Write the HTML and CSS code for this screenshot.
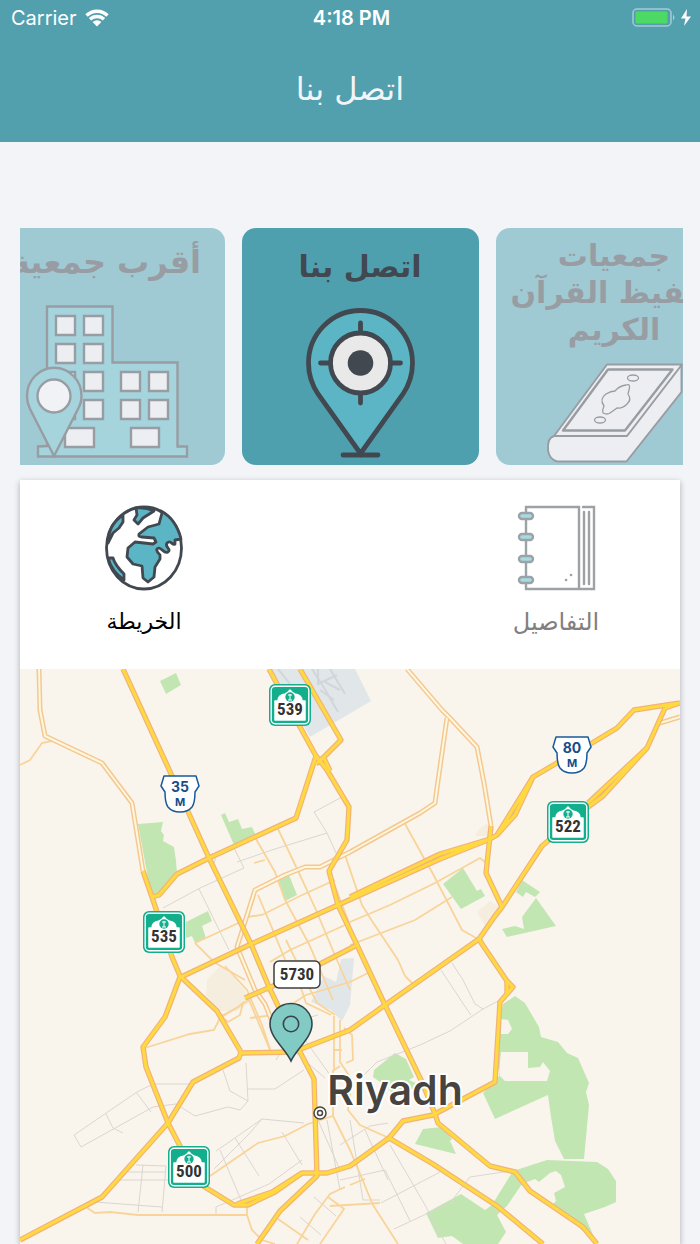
FILE: index.html
```html
<!DOCTYPE html>
<html lang="ar">
<head>
  <meta charset="UTF-8" />
  <meta name="viewport" content="width=device-width, initial-scale=1.0"/>
  <title>اتصل بنا</title>
  <link rel="stylesheet" href="styles.css">
</head>
<body>

<header class="app-header">
  <div class="status-bar">
    <div class="status-left">
      <span>Carrier</span>
      <svg class="wifi" viewBox="0 0 24 18" aria-hidden="true">
        <path d="M1.500 6.500a15 15 0 0 1 21 0M5 10.300a10 10 0 0 1 14 0" fill="none" stroke="#fff" stroke-width="3.400"/>
        <path d="M7.600 13a6.300 6.300 0 0 1 8.800 0L12 17.500z" fill="#fff"/>
      </svg>
    </div>
    <span class="status-time">4:18 PM</span>
    <div class="status-right">
      <svg class="battery" viewBox="0 0 60 20" aria-hidden="true">
        <rect x="1" y="1" width="38" height="17" rx="4" fill="none" stroke="#a5cdd5" stroke-width="1.500"/>
        <rect x="3.500" y="3.500" width="32" height="12" rx="1" fill="#4cd964"/>
        <path d="M41 6.500q3 3 0 6z" fill="#a5cdd5"/>
        <path d="M55 1l-6 9.500h4.500L52 18l7-9.500h-4.500z" fill="#fff"/>
      </svg>
    </div>
  </div>
  <h1 class="app-title" dir="rtl">اتصل بنا</h1>
</header>

<nav class="carousel">
  <button class="card" type="button">
    <span class="card-title card-title-wide" dir="rtl">أقرب جمعية</span>
    <svg class="card-icon" viewBox="-12 300 237 165" aria-hidden="true">
      <g fill="#5bb5c4" stroke="#414850" stroke-width="2.400">
        <path d="M47 446V306.500h65.500v56h65v84H187v10H38v-10z"/>
        <g fill="#e9e9eb">
          <path d="M56 316h19v19H56zM84 316h19v19H84zM56 344h19v19H56zM84 344h19v19H84zM56 372h19v19H56zM84 372h19v19H84zM56 400h19v19H56zM84 400h19v19H84z"/>
          <path d="M121 372h19v19h-19zM149 372h19v19h-19zM121 400h19v19h-19zM149 400h19v19h-19zM65 428h29v19H65zM131 428h28v19h-28z"/>
        </g>
        <path d="M54 456L30 409Q27 403 27 396a27 28 0 0 1 54.500 0Q81.500 403 78 409z"/>
        <circle cx="54" cy="396" r="16.500" fill="#f1f1f4"/>
      </g>
    </svg>
  </button>

  <button class="card active" type="button">
    <span class="card-title" dir="rtl">اتصل بنا</span>
    <svg class="card-icon" viewBox="242 300 237 165" aria-hidden="true">
      <g stroke="#414850" stroke-width="4.800" stroke-linecap="round" fill="none">
        <path d="M360.500 453.500L318 394C312 385 308.500 375 308.500 363a52 52.500 0 0 1 104 0C412.500 375 409 385 403 394z" fill="#5bb5c4"/>
        <path d="M343 455h35M360.500 323v80M320.500 363h80"/>
        <circle cx="360.500" cy="363" r="30" fill="#e9e9e9"/>
      </g>
      <circle cx="360.500" cy="363" r="12.800" fill="#414850"/>
    </svg>
  </button>

  <button class="card" type="button">
    <span class="card-title card-title-long" dir="rtl">جمعيات<br>تحفيظ القرآن<br>الكريم</span>
    <svg class="card-icon" viewBox="495 300 237 165" aria-hidden="true">
      <g fill="#e9e9eb" stroke="#414850" stroke-width="2" stroke-linejoin="round">
        <path d="M553 436q-7 2-6 14 1 9 9 11.500h69.500L680.500 392V365z"/>
        <path d="M606 364.500h75L626 436h-73z"/>
        <path d="M607 369.500h64.500L624 430.500h-62z" stroke-width="2.400"/>
        <g stroke-width="1.300">
          <path d="M625 385q5-2 3 5l-1 4q4 6-1 10-5 5-10 4-4 3-7 5t-7 0q-1-3 1-7-5-7 2-12 5-3 9-3 4-5 11-6z"/>
          <ellipse cx="632" cy="378" rx="5.500" ry="3"/>
          <ellipse cx="599" cy="420" rx="5.500" ry="3"/>
        </g>
      </g>
    </svg>
  </button>
</nav>

<main class="panel">
  <div class="tabs">
    <button class="tab active" type="button">
      <svg class="tab-icon" viewBox="0 0 80 86" aria-hidden="true">
        <g fill="#5bb5c4" stroke="#414850" stroke-width="2.800" stroke-linejoin="round" stroke-linecap="round">
          <ellipse cx="40" cy="43" rx="37.500" ry="41" fill="#fff"/>
          <path d="M19 10L19 17 15 23 9 28 4 38Q4 20 19 10z"/>
          <path d="M32 3L33 10 30 15 34 19 39 13 50 6Q42 2 32 3z"/>
          <path d="M57 6L58 8 55 19 44 22 35 29Q34 32 38 32L50 33 52 37 49 39 31 37 24 43 23 52 29 59 38 61 39 73 44 77 50 72 51 62 56 54V50Q50 44 55 43C59 44 60 49 64 47 68 44 60 42 63 38 67 34 68 41 71 39L71 35 77 34Q72 14 57 6z"/>
          <path d="M4 53H9Q11 60 20 69V75Q8 67 4 53z"/>
        </g>
      </svg>
      <span class="tab-label" dir="rtl">الخريطة</span>
    </button>
    <button class="tab" type="button">
      <svg class="tab-icon" viewBox="0 0 80 86" aria-hidden="true">
        <g fill="none" stroke="#9ca2a6" stroke-width="2.400" stroke-linecap="round">
          <path d="M63 2H10V84H63zM67 2H78V84H63M68 7V79M73 7V79"/>
          <g fill="#a5dbe3">
            <rect x="3" y="8" width="14" height="6" rx="3"/>
            <rect x="3" y="29" width="14" height="6" rx="3"/>
            <rect x="3" y="51" width="14" height="6" rx="3"/>
            <rect x="3" y="72" width="14" height="6" rx="3"/>
          </g>
        </g>
        <path d="M50 75h.1M55 70h.1" stroke="#9ca2a6" stroke-width="2.600" stroke-linecap="round"/>
      </svg>
      <span class="tab-label" dir="rtl">التفاصيل</span>
    </button>
  </div>

  <svg class="map" viewBox="20 669 660 575" preserveAspectRatio="xMidYMin slice" role="img" aria-label="Riyadh">
    <defs>
      <g id="highways">
        <path d="M123 669L172 776 209 858 251 944 269 987 300 1052 314 1079 317 1176 280 1211 257 1244"/>
        <path d="M269 669L299 725 316 756 327 770 349 807 347 840 329 871 338 905 357 945 385 1005 422 1082 435 1114 438 1123 490 1166 515 1172 530 1191 583 1227 597 1244"/>
        <path d="M300 669L341 740 325 756 316 764M323 756L330 771M316 756L296 818 209 858 177 874 159 895 152 897"/>
        <path d="M143 871L152 897 172 957 180 976 217 1011 241 1052 239 1058 193 1082 168 1123 102 1197 20 1240"/>
        <path d="M180 977L165 1017 143 1047 146 1067 168 1123 180 1146 200 1184 234 1205 248 1205 275 1192 302 1173 327 1173 350 1166 389 1138 403 1121 433 1115 495 1082 500 1002 513 987 507 981 482 944 479 939"/>
        <path d="M237 1204L272 1192 302 1173M507 981V995"/>
        <path d="M241 1053L293 1052 350 1030 385 1005 479 939 495 916 502 907 542 846 588 807 603 796 647 748 665 708"/>
        <path d="M181 977L249 945 338 905 440 859 490 839 497 835 515 815 533 777 557 763 592 743 617 728 634 710 680 703M350 897L440 854 490 839M497 835L533 777M588 803L647 748M665 708L680 703"/>
        <path d="M491 826L486 873 502 907M245 998L273 986 320 964 357 945M389 1138L433 1164 497 1206 543 1244"/>
      </g>
      <g id="avenues">
        <path d="M39 669L40 710 45 736 102 763 132 803 143 871"/>
        <path d="M407 669L442 710 450 718 477 747 484 783 491 826"/>
        <path d="M447 718L437 788 435 803 420 813 350 852 320 867 305 867 285 875 255 890 237 947 255 990 265 1004 271 1019"/>
        <path d="M660 723L680 717"/>
      </g>
      <g id="shield-green" transform="translate(-21 -21)">
        <rect width="42" height="42" rx="6" fill="#13ae8c"/>
        <rect x="2.200" y="2.200" width="37.600" height="37.600" rx="4" fill="none" stroke="#fff" stroke-width="1.400"/>
        <path d="M6 36V17h3q0-6 7-7 3-1 5-4 2 3 5 4 7 1 7 7h3v19z" fill="#fff" stroke="#fff" stroke-width="1.500" stroke-linejoin="round"/>
        <circle cx="21" cy="13" r="4.700" fill="#13ae8c"/>
        <path d="M21 10v6M19 16h4M19 11h4" stroke="#fff" stroke-width="1"/>
      </g>
      <g id="shield-white">
        <path d="M-16-18H16L19-8 15-2Q15 9 12 13 8 18 0 18T-12 13Q-15 9-15-2L-19-8z" fill="#fff" stroke="#175a9c" stroke-width="1.500" stroke-linejoin="round"/>
      </g>
    </defs>

    <rect x="20" y="669" width="660" height="575" fill="#f9f5ed"/>

    <!-- airport and desert areas -->
    <g fill="#e1e6e9">
      <path d="M271 669H355L371 701 310 737z"/>
      <path d="M324 976L336 982 341 959 354 958 350 1005 342 1021 331 1010 311 1002z"/>
    </g>
    <path d="M278 669L290 684M312 669L323 686 338 712M318 669V684L337 675M325 682L340 690M320 690L334 700M330 669L345 694" fill="none" stroke="#d0d6da" stroke-width="2"/>
    <g fill="#f5eedf">
      <path d="M207 980L220 966 230 972 245 991 249 1003 237 1011 218 1011 206 995z"/>
      <path d="M475 836L480 828 490 822V836zM477 912L490 901 499 907 486 927z"/>
    </g>

    <!-- parks -->
    <g fill="#c2e6b2">
      <path d="M160 681L176 673 181 685 166 694z"/>
      <path d="M138 824L163 822 161 831 164 835 163 841 174 847 176 861 177 873 159 894 151 895z"/>
      <path d="M221 815L225 813 229 822 238 819 242 829 252 827 256 836 234 845z"/>
      <path d="M278 878L289 875 297 895 285 901z"/>
      <path d="M186 922L208 911 212 921 202 926 206 938 195 943 192 936 186 938z"/>
      <path d="M443 884L463 868 477 891 481 889 485 896 461 909z"/>
      <path d="M516 892L522 880 540 892 535 897 526 892 523 897z"/>
      <path d="M536 898L556 926 507 937 502 929 515 926 524 929 522 917z"/>
      <path d="M374 1070L395 1053 406 1059 414 1077 409 1080 418 1084 413 1089 393 1093 380 1082 373 1077z"/>
      <path fill-rule="evenodd" d="M503 1004L515 996 525 1003 539 1027 541 1037 558 1042 567 1053 578 1058 589 1083 586 1092 589 1105 584 1159H564L555 1141 551 1117 548 1095 495 1119 483 1093 500 1075 496 1060 498 1035zM501 1019L508 1020 512 1029 508 1034H501zM501 1052H528V1068L540 1067 543 1062 550 1071 547 1081H505L499 1075z"/>
      <path d="M415 1144L423 1129 442 1127 452 1139 450 1141 456 1154z"/>
      <path d="M513 1171L547 1160 597 1162 608 1169 616 1181V1202L605 1207 584 1214 597 1244 585 1233 553 1204 556 1201 554 1193 565 1187 561 1175 556 1171 550 1173 539 1182 535 1179 522 1184 507 1206 497 1215 506 1232 498 1244H463L452 1236 438 1238 426 1213 461 1194 485 1210 492 1205z"/>
    </g>

    <!-- small streets -->
    <g fill="none" stroke="#dbd7d0" stroke-width="1">
      <path d="M342 797L314 812 327 833 275 849 237 862M327 833L337 855M234 848L244 868 200 888 163 908M199 889L229 950M216 858L212 868"/>
      <path d="M74 1135L137 1092 153 1084H190M74 1135L81 1147 153 1107 176 1104 195 1116 228 1107 240 1110 248 1101 246 1063M106 1114L113 1128 123 1133M136 1092L151 1112M223 1070L230 1091 248 1101M248 1089H275L304 1070"/>
      <path d="M136 1165L166 1166M126 1172H166M117 1180H168M143 1165L138 1212M166 1166L162 1212M95 1202L162 1207M216 1151L235 1138 262 1119 304 1123M235 1138L259 1176M220 1150L241 1200M216 1215V1207L269 1184 302 1160M282 1132L302 1165M262 1119L248 1135 214 1169"/>
      <path d="M441 970L466 1008 471 1015M452 963L463 980 475 1004 483 1009 500 1000M483 1009L450 1031 420 1045 377 1062 361 1078M340 1145L370 1126 388 1123M365 1130L388 1180M350 1120L363 1200 380 1200M340 1180L385 1170 410 1221M390 1145L425 1205 446 1244M381 1203L440 1172M394 1229L450 1203 470 1177 510 1171M276 1060L300 1020 318 1015M305 1040L330 1075M293 1050L325 1078M318 1120L340 1170M327 1120L340 1190M300 1217L321 1235M314 1197L336 1216"/>
    </g>
    <g fill="none" stroke="#f9d49a" stroke-width="1.800">
      <path d="M20 765L30 760 42 743 57 740M256 839L275 872 285 900 309 944 333 1000M278 829L300 875 316 910 334 953 350 990M254 863L265 860M195 943L245 920M195 943L215 963M246 917L262 915 300 896 335 880M258 895L272 928 293 979M270 962L290 950 345 925M212 961L245 980M221 1016L237 1008 243 1003 240 1015 228 1022z"/>
      <path d="M404 822L425 860 432 872 462 930 478 939M350 922L390 905 435 883 480 858 485 862M350 945L415 920 452 897M345 855L362 905 372 921 398 960 405 976 413 984M329 871L350 925"/>
      <path d="M145 1048L190 1034 214 1030 220 1018 249 1000 270 1050M250 1018L275 1015 306 995 350 982 368 973M225 966L247 990 262 1025 272 1055M286 940L308 985 317 1003 335 1015M300 985L306 1003 331 1015"/>
      <path d="M334 1016V1070L340 1066M340 1020V1062L352 1080 348 1110 360 1125 389 1138M344 1028L352 1035 353 1060 346 1063M333 1050H342M333 1116L350 1150 373 1205 398 1244M350 1185L365 1179M210 1176L258 1143 285 1136 308 1124 333 1116M333 1070V1116"/>
      <path d="M86 1207L95 1213 110 1212 138 1215H247L252 1230 262 1240 275 1244M247 1215V1205M278 1219L308 1240M297 1244L315 1214 330 1194 345 1187M328 1197L344 1209 320 1244M330 1206L380 1203"/>
    </g>

    <!-- main roads: casing first, then fill -->
    <g fill="none" stroke-linejoin="round">
      <use href="#avenues" stroke="#f4c892" stroke-width="5"/>
      <use href="#avenues" stroke="#fff7dc" stroke-width="2"/>
      <use href="#highways" stroke="#f2b27c" stroke-width="5.400"/>
      <use href="#highways" stroke="#ffda3e" stroke-width="3"/>
    </g>

    <!-- road shields -->
    <g class="shield">
      <use href="#shield-green" x="290" y="705"/>
      <text x="290" y="715">539</text>
      <use href="#shield-green" x="568" y="822"/>
      <text x="568" y="832">522</text>
      <use href="#shield-green" x="164" y="932"/>
      <text x="164" y="942">535</text>
      <use href="#shield-green" x="189" y="1167"/>
      <text x="189" y="1177">500</text>
      <rect x="274" y="961" width="46" height="27" rx="5" fill="#fff" stroke="#3c3c3c" stroke-width="1.500"/>
      <text x="297" y="980">5730</text>
    </g>
    <g class="shield shield-blue">
      <use href="#shield-white" x="180" y="794"/>
      <text x="180" y="792">35</text>
      <text class="shield-type" x="180" y="806">M</text>
      <use href="#shield-white" x="572" y="755"/>
      <text x="572" y="753">80</text>
      <text class="shield-type" x="572" y="767">M</text>
    </g>

    <!-- city -->
    <circle cx="320" cy="1113" r="6" fill="#fff" stroke="#4a4640" stroke-width="1.500"/>
    <circle cx="320" cy="1113" r="2.500" fill="#fff" stroke="#4a4640" stroke-width="1.500"/>
    <text class="city" x="395" y="1105">Riyadh</text>

    <path d="M291 1061C286 1049 270 1038 270 1024a21 20.500 0 0 1 42 0C312 1038 296 1049 291 1061z" fill="#82cbc4" stroke="#36454c" stroke-width="1.600"/>
    <circle cx="291" cy="1024" r="7.700" fill="none" stroke="#36454c" stroke-width="1.600"/>
  </svg>
</main>

</body>
</html>
```
FILE: styles.css
```css
* {
  box-sizing: border-box;
}

body {
  margin: 0;
  min-height: 100vh;
  display: flex;
  flex-direction: column;
  background: #f2f4f8;
  font-family: "Inter", "DejaVu Sans", sans-serif;
}

button {
  margin: 0;
  padding: 0;
  border: none;
  background: none;
  font-family: "DejaVu Sans", sans-serif;
  cursor: pointer;
}

.app-header {
  height: 142px;
  background: #529fae;
  color: #fff;
}

.status-bar {
  display: grid;
  grid-template-columns: 1fr auto 1fr;
  align-items: center;
  height: 36px;
  padding: 0 8px 0 11px;
  font-size: 20px;
}

.status-left {
  display: flex;
  align-items: center;
  gap: 8px;
}

.wifi {
  width: 24px;
  height: 18px;
}

.status-time {
  font-weight: 600;
}

.status-right {
  display: flex;
  justify-content: flex-end;
}

.battery {
  width: 60px;
  height: 20px;
}

.app-title {
  margin: 0;
  color: #f2f4f8;
  font-family: "DejaVu Sans", sans-serif;
  font-size: 32px;
  font-weight: 400;
  line-height: 106px;
  text-align: center;
}

/* Cards */
.carousel {
  display: flex;
  justify-content: center;
  gap: 17px;
  margin: 86px 17px 15px 20px;
  padding-left: 17px;
  overflow: hidden;
}

.card {
  position: relative;
  flex: 0 0 237px;
  height: 237px;
  border-radius: 14px;
  background: #4fa0af;
  overflow: hidden;
  opacity: 0.5;
}

.card.active {
  opacity: 1;
}

.card-title {
  position: absolute;
  top: 20px;
  left: 0;
  right: 0;
  color: #414850;
  font-size: 30px;
  font-weight: 700;
  line-height: 37px;
  white-space: nowrap;
}

.card-title-wide {
  top: 16px;
  font-size: 32px;
}

.card-title-long {
  top: 9px;
}

.card-icon {
  position: absolute;
  left: 0;
  bottom: 0;
  width: 100%;
}

/* Tabs + map */
.panel {
  flex: 1;
  display: flex;
  flex-direction: column;
  margin: 0 20px;
  background: #fff;
  box-shadow: 0 2px 6px rgba(0, 0, 0, 0.3);
}

.tabs {
  display: flex;
  justify-content: space-between;
  height: 189px;
  padding: 25px 80px 0;
}

.tab {
  display: flex;
  flex-direction: column;
  align-items: center;
  gap: 16px;
  width: 88px;
  color: #808080;
  font-size: 24px;
}

.tab.active {
  color: #000;
  font-size: 22px;
}

.tab-icon {
  width: 80px;
  height: 86px;
}

.tab-label {
  line-height: 30px;
  white-space: nowrap;
}

.map {
  display: block;
  flex: 1;
  width: 100%;
  min-height: 0;
}

.shield text {
  fill: #333;
  font-family: "Roboto Condensed", "Roboto", sans-serif;
  font-size: 17px;
  font-weight: 700;
  text-anchor: middle;
}

.shield-blue text {
  fill: #164e87;
  font-family: "Inter", sans-serif;
  font-size: 14px;
}

.shield-blue .shield-type {
  font-size: 11px;
}

.city {
  fill: #47443f;
  stroke: #fff;
  stroke-width: 4px;
  stroke-linejoin: round;
  paint-order: stroke;
  font-family: "Inter", sans-serif;
  font-size: 41px;
  font-weight: 600;
  text-anchor: middle;
}
```
